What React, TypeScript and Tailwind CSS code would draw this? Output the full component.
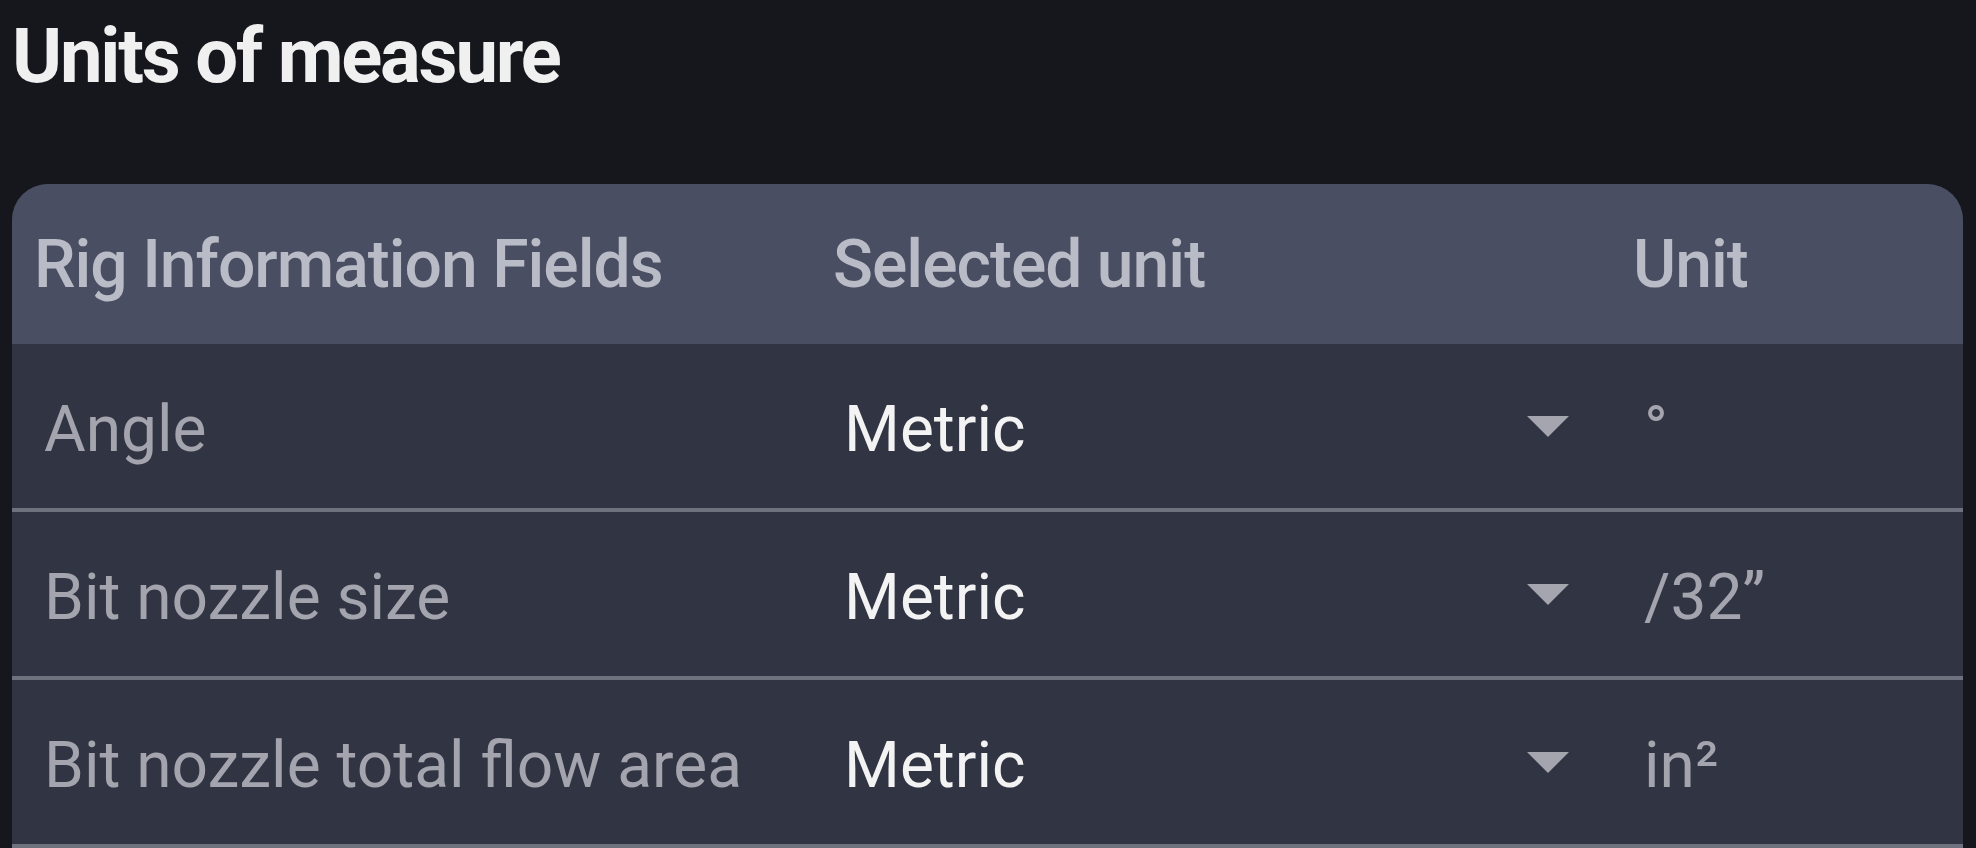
import React from "react";

const rows = [
  { label: "Angle", value: "Metric", unit: "°" },
  { label: "Bit nozzle size", value: "Metric", unit: "/32”" },
  { label: "Bit nozzle total flow area", value: "Metric", unit: "in²" },
];

function Arrow() {
  return (
    <svg width="42" height="21" viewBox="0 0 42 21" className="shrink-0">
      <path d="M0 0 L42 0 L21 21 Z" fill="#a4a5ae" />
    </svg>
  );
}

export default function App() {
  return (
    <div
      className="w-full h-[848px] overflow-hidden bg-[#16171c]"
      style={{ fontFamily: "Roboto, 'Noto Sans', sans-serif" }}
    >
      <div className="pl-[12px] pt-[18px]">
        <h1 className="text-[76px] leading-[76px] font-bold tracking-[-2.2px] text-[#f0f0f0]">
          Units of measure
        </h1>
      </div>
      <div className="mt-[90px] ml-[12px] w-[1951px] rounded-t-[36px] overflow-hidden bg-[#313443]">
        <div className="grid grid-cols-[799px_800px_1fr] h-[160px] bg-[#494e62] items-center text-[66px] font-medium tracking-[-1px] text-[#b9bcc6]">
          <div className="pl-[22px]">Rig Information Fields</div>
          <div className="pl-[22px]">Selected unit</div>
          <div className="pl-[22px]">Unit</div>
        </div>
        {rows.map((r) => (
          <div
            key={r.label}
            className="grid grid-cols-[799px_800px_1fr] h-[168px] items-center border-b-4 border-[#6e727e] text-[64px]"
          >
            <div className="pl-[32px] pt-[8px] text-[#a3a4ad]">{r.label}</div>
            <div className="pl-[33px] pr-[42px] flex items-center justify-between text-[#f3f3f3]">
              <span className="pt-[8px]">{r.value}</span>
              <Arrow />
            </div>
            <div className="pl-[33px] pt-[8px] text-[#a3a4ad]">{r.unit}</div>
          </div>
        ))}
      </div>
    </div>
  );
}
